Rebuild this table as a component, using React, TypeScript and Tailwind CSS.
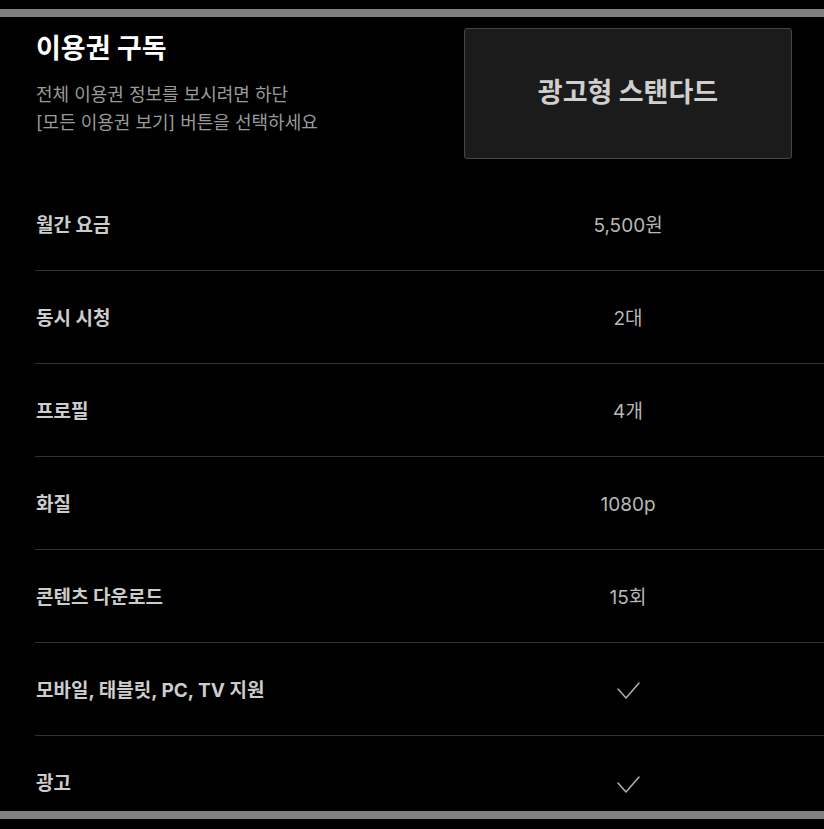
const rows: { label: string; value: string | null }[] = [
  { label: '월간 요금', value: '5,500원' },
  { label: '동시 시청', value: '2대' },
  { label: '프로필', value: '4개' },
  { label: '화질', value: '1080p' },
  { label: '콘텐츠 다운로드', value: '15회' },
  { label: '모바일, 태블릿, PC, TV 지원', value: null },
  { label: '광고', value: null },
];

const CheckMark = () => (
  <svg width="24" height="18" viewBox="0 0 24 18" fill="none">
    <polyline points="2,7 10,16 23,1" stroke="#b0b0b0" strokeWidth="1.5" strokeLinecap="round" strokeLinejoin="round" />
  </svg>
);

const App = () => {
  return (
    <div
      className="w-[824px] h-[829px] bg-black pt-[9px] overflow-hidden"
      style={{ fontFamily: 'Inter, "Noto Sans CJK KR", sans-serif' }}
    >
      <div className="h-[8px] bg-[#808080]" />
      <div className="h-[794px] overflow-hidden">
        <div className="flex pl-[36px] pr-[32px] pt-[11px]">
          <div className="flex-1 pt-[2px]">
            <h1 className="text-[27px] leading-[38px] font-bold text-white">이용권 구독</h1>
            <p className="mt-[13px] text-[18px] leading-[28px] text-[#9a9a9a]">
              전체 이용권 정보를 보시려면 하단
              <br />
              [모든 이용권 보기] 버튼을 선택하세요
            </p>
          </div>
          <div className="w-[328px] h-[131px] flex items-center justify-center bg-[#1b1b1b] border border-[#474747] rounded-[3px]">
            <span className="text-[27px] font-bold text-[#cfcfcf]">광고형 스탠다드</span>
          </div>
        </div>

        <div className="ml-[35px] mt-[19px]">
          {rows.map((row, i) => (
            <div
              key={row.label}
              className={`flex items-center h-[93px] pt-[4px] ${i < rows.length - 1 ? 'border-b border-[#333333]' : ''}`}
            >
              <div className="flex-1 pl-[1px] text-[19px] font-bold text-[#cccccc]">{row.label}</div>
              <div className="w-[328px] flex justify-center text-[19px] text-[#b8b8b8]">
                {row.value ?? <CheckMark />}
              </div>
              <div className="w-[32px]" />
            </div>
          ))}
        </div>
      </div>
      <div className="h-[8px] bg-[#808080]" />
    </div>
  );
};

export default App;
